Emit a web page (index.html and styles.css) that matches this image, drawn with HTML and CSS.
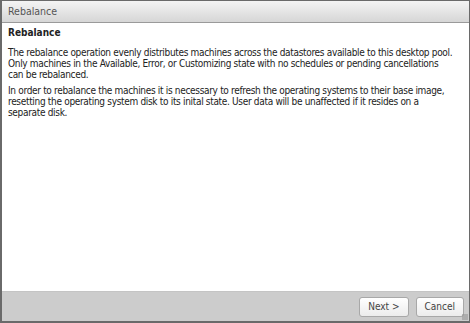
FILE: index.html
```html
<!DOCTYPE html>
<html lang="en">
<head>
  <meta charset="UTF-8">
  <title>Rebalance</title>
  <link rel="stylesheet" href="styles.css">
</head>
<body>
  <div class="dialog">
    <div class="title-bar">Rebalance</div>
    <div class="content">
      <h3>Rebalance</h3>
      <p>The rebalance operation evenly distributes machines across the datastores available to this desktop pool. Only machines in the Available, Error, or Customizing state with no schedules or pending cancellations can be rebalanced.</p>
      <p>In order to rebalance the machines it is necessary to refresh the operating systems to their base image, resetting the operating system disk to its inital state. User data will be unaffected if it resides on a separate disk.</p>
    </div>
    <div class="footer">
      <button>Next &gt;</button>
      <button>Cancel</button>
      <span class="grip"></span>
    </div>
  </div>
</body>
</html>
```

FILE: styles.css
```css
html, body { margin: 0; padding: 0; }
body { font-family: "DejaVu Sans Condensed", "DejaVu Sans", sans-serif; font-size: 10px; color: #222; }
.dialog { width: 470px; height: 323px; box-sizing: border-box; border: 2px solid #6a6a6a; border-top-width: 1px; border-right-width: 1px; display: flex; flex-direction: column; background: #fff; }
.title-bar { height: 21px; line-height: 21px; padding-left: 6px; font-size: 10.5px; color: #555; background: linear-gradient(#f4f4f4, #d6d6d6); border-bottom: 1px solid #9a9a9a; }
.content { flex: 1; padding: 4px 15px 0 6px; letter-spacing: -0.32px; }
.content h3 { font-size: 10px; margin: 0 0 8px; line-height: 12px; letter-spacing: 0; }
.content p { margin: 0 0 5px; line-height: 11px; }
.footer { height: 29px; background: #cccccc; border-top: 1px solid #c4c4c4; display: flex; justify-content: flex-end; align-items: center; gap: 7px; padding-right: 5px; position: relative; }
button { font-family: inherit; font-size: 10px; color: #444; height: 20px; padding: 0 8px; background: linear-gradient(#ffffff, #ececec); border: 1px solid #a8a8a8; border-radius: 3px; }
.grip { position: absolute; right: 1px; bottom: 1px; width: 6px; height: 6px; background: radial-gradient(circle, #888 0.6px, transparent 0.8px) 0 0 / 2px 2px; }
```
